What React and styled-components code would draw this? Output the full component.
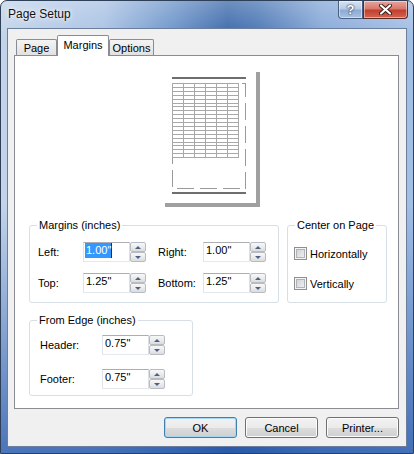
import styled, { createGlobalStyle } from "styled-components";

const GlobalStyle = createGlobalStyle`
  html, body { margin: 0; padding: 0; background: #fff; }
  body { font-family: "Liberation Sans", Arial, sans-serif; font-size: 11px; color: #000; }
`;

const Window = styled.div`
  width: 414px;
  height: 454px;
  box-sizing: border-box;
  border: 1px solid #2e3f58;
  border-radius: 7px 7px 0 0;
  background:
    linear-gradient(180deg, rgba(255,255,255,0.25) 0%, rgba(255,255,255,0) 8%, rgba(255,255,255,0) 45%, rgba(35,85,170,0.75) 100%),
    linear-gradient(90deg, #c3d4ea 0%, #a9c2e4 25%, #6b93c9 42%, #3c69aa 55%, #4a76b4 62%, #86a8d8 78%, #a3bfe5 100%);
  display: flex;
  flex-direction: column;
  overflow: hidden;
`;

const TitleBar = styled.div`
  height: 27px;
  display: flex;
  justify-content: space-between;
  align-items: flex-start;
`;

const Title = styled.div`
  padding: 6px 0 0 7px;
  font-size: 12px;
  line-height: 15px;
  color: #111;
  text-shadow: 0 0 6px rgba(255,255,255,0.95), 0 0 3px rgba(255,255,255,0.9);
`;

const Captions = styled.div`
  display: flex;
  margin-right: 5px;
`;

const CaptionButton = styled.div`
  box-sizing: border-box;
  width: ${p => p.$w}px;
  height: 18px;
  display: flex;
  align-items: center;
  justify-content: center;
  border: 1px solid ${p => (p.$close ? "#5b2a24" : "#4a5f80")};
  border-top: none;
  border-radius: ${p => (p.$close ? "0 0 4px 0" : "0 0 0 4px")};
  background: ${p =>
    p.$close
      ? "linear-gradient(180deg, #e8a69c 0%, #d8786b 45%, #c2402f 55%, #d4654f 100%)"
      : "linear-gradient(180deg, #d8e3f1 0%, #b8cbe5 45%, #8eabd5 55%, #a8c1e3 100%)"};
  box-shadow: inset 0 0 0 1px rgba(255,255,255,0.45);
  color: #fff;
  font-weight: bold;
  font-size: 13px;
  text-shadow: 0 0 2px #1c2c44, 0 0 1px #1c2c44;
`;

const Client = styled.div`
  flex: 1;
  margin: 0 6px 6px 6px;
  background: #f0f0f0;
  border: 1px solid #6b7f9c;
  padding: 6px 7px 0 6px;
  display: flex;
  flex-direction: column;
  font-family: "Liberation Sans", Arial, sans-serif;
  font-size: 11px;
`;

const TabRow = styled.div`
  display: flex;
  align-items: flex-end;
  height: 21px;
  margin-bottom: -1px;
  padding-left: 2px;
  position: relative;
  z-index: 1;
`;

const Tab = styled.div`
  box-sizing: border-box;
  width: ${p => p.$w}px;
  height: ${p => (p.$active ? 21 : 16)}px;
  margin-bottom: ${p => (p.$active ? 0 : 1)}px;
  padding-top: ${p => (p.$active ? 2 : 1)}px;
  line-height: 14px;
  text-align: center;
  border: 1px solid #898c95;
  border-bottom: none;
  border-radius: 2px 2px 0 0;
  background: ${p => (p.$active ? "#fff" : "linear-gradient(180deg, #f4f4f4 0%, #ebebeb 50%, #e1e1e1 100%)")};
`;

const Panel = styled.div`
  height: 354px;
  box-sizing: border-box;
  background: #fff;
  border: 1px solid #898c95;
  padding-top: 12px;
`;

const PreviewWrap = styled.div`
  display: flex;
  justify-content: center;
  padding-left: 8px;
  svg { display: block; }
`;

const GroupArea = styled.div`
  display: flex;
  flex-direction: column;
  align-items: flex-start;
  gap: 11px;
  margin-top: 11px;
  padding-left: 14px;
`;

const GroupRow = styled.div`
  display: flex;
  gap: 8px;
`;

const GroupBox = styled.fieldset`
  margin: 0;
  min-width: 0;
  width: ${p => p.$w}px;
  box-sizing: border-box;
  padding: ${p => p.$pad};
  border: 1px solid #d5dfe5;
  border-radius: 3px;
  display: flex;
  flex-direction: column;
  gap: ${p => p.$gap}px;

  & > div {
    margin-left: ${p => p.$indent}px;
  }
`;

const Legend = styled.legend`
  margin-left: 7px;
  padding: 0 2px;
  font-size: 11px;
  line-height: 13px;
  color: #000;
`;

const FieldRow = styled.div`
  display: flex;
  align-items: center;
  height: 20px;
`;

const Label = styled.span`
  width: ${p => p.$w}px;
  flex: none;
`;

const SpinBox = styled.div`
  display: flex;
  height: 20px;
  margin-right: ${p => p.$mr || 0}px;
`;

const Field = styled.div`
  box-sizing: border-box;
  width: 47px;
  height: 20px;
  border: 1px solid;
  border-color: #abadb3 #dbdfe6 #e3e9ef #e2e3ea;
  background: #fff;
  padding-left: 1px;
  display: flex;
  align-items: flex-start;
`;

const FieldText = styled.span`
  display: inline-block;
  line-height: 15px;
  padding-left: 1px;
  background: ${p => (p.$selected ? "#3399ff" : "transparent")};
  color: ${p => (p.$selected ? "#fff" : "#000")};
  border-right: 1px solid ${p => (p.$selected ? "#3a2a10" : "transparent")};
`;

const Spinner = styled.div`
  width: 16px;
  display: flex;
  flex-direction: column;
`;

const SpinButton = styled.div`
  flex: 1;
  box-sizing: border-box;
  border: 1px solid #b7bcc4;
  border-radius: 2px;
  background: linear-gradient(180deg, #f7f7f7 0%, #ececec 50%, #dcdcdc 100%);
  display: flex;
  align-items: center;
  justify-content: center;

  &::after {
    content: "";
    width: 0;
    height: 0;
    border-left: 3px solid transparent;
    border-right: 3px solid transparent;
    ${p => (p.$down ? "border-top: 3px solid #4c6284;" : "border-bottom: 3px solid #4c6284;")}
  }
`;

const CheckRow = styled.div`
  display: flex;
  align-items: center;
  gap: 3px;
  height: 13px;
`;

const CheckBox = styled.span`
  width: 13px;
  height: 13px;
  box-sizing: border-box;
  border: 1px solid #8e8f8f;
  background: linear-gradient(135deg, #c9ccd1 0%, #f6f6f6 100%);
  box-shadow: inset 0 0 0 1px #f4f4f4, inset 0 0 0 2px #b0b4ba;
`;

const ButtonRow = styled.div`
  display: flex;
  justify-content: flex-end;
  gap: 8px;
  padding-top: 8px;
`;

const Button = styled.button`
  width: 73px;
  height: 21px;
  box-sizing: border-box;
  padding: 0;
  font-family: "Liberation Sans", Arial, sans-serif;
  font-size: 11px;
  color: #000;
  border: 1px solid ${p => (p.$default ? "#3c7fb1" : "#707070")};
  border-radius: 3px;
  background: linear-gradient(180deg, #f2f2f2 0%, #ebebeb 50%, #dddddd 51%, #cfcfcf 100%);
  box-shadow: inset 0 0 0 1px ${p => (p.$default ? "#a6d8f6" : "#fcfcfc")};
`;

function Spin({ value, selected, mr }) {
  return (
    <SpinBox $mr={mr}>
      <Field>
        <FieldText $selected={selected}>{value}</FieldText>
      </Field>
      <Spinner>
        <SpinButton />
        <SpinButton $down />
      </Spinner>
    </SpinBox>
  );
}

function PagePreview() {
  const cols = [0, 1, 2, 3, 4, 5, 6].map(i => 11 + i * 11);
  const rows = Array.from({ length: 20 }, (_, i) => 15 + Math.round(i * 3.9));
  return (
    <svg width="100" height="140" viewBox="0 0 100 140" shapeRendering="crispEdges">
      <rect x="4" y="135" width="95" height="4" fill="#a0a0a0" />
      <rect x="95" y="4" width="4" height="135" fill="#a0a0a0" />
      <rect x="0" y="0" width="95" height="135" fill="#fff" />
      <rect x="11" y="9" width="74" height="2" fill="#6e6e6e" />
      <rect x="11" y="124" width="74" height="2" fill="#6e6e6e" />
      <rect x="11.5" y="15.5" width="73" height="105" fill="none" stroke="#9a9a9a" strokeDasharray="17 6" />
      <rect x="11" y="15" width="66" height="75" fill="#fff" />
      {rows.map(y => (
        <line key={"r" + y} x1="11" x2="78" y1={y + 0.5} y2={y + 0.5} stroke="#a8a8a8" />
      ))}
      {cols.map(x => (
        <line key={"c" + x} x1={x + 0.5} x2={x + 0.5} y1="15" y2={rows[rows.length - 1] + 1} stroke="#a8a8a8" />
      ))}
    </svg>
  );
}

export default function App() {
  return (
    <>
      <GlobalStyle />
      <Window>
        <TitleBar>
          <Title>Page Setup</Title>
          <Captions>
            <CaptionButton $w={25}>?</CaptionButton>
            <CaptionButton $w={45} $close>
              <svg width="13" height="11" viewBox="0 0 13 11">
                <path d="M2 1.5 L11 9.5 M11 1.5 L2 9.5" stroke="#3a1a16" strokeWidth="4" strokeLinecap="round" />
                <path d="M2 1.5 L11 9.5 M11 1.5 L2 9.5" stroke="#fff" strokeWidth="2.2" strokeLinecap="round" />
              </svg>
            </CaptionButton>
          </Captions>
        </TitleBar>
        <Client>
          <TabRow>
            <Tab $w={41}>Page</Tab>
            <Tab $w={52} $active>Margins</Tab>
            <Tab $w={45}>Options</Tab>
          </TabRow>
          <Panel>
            <PreviewWrap>
              <PagePreview />
            </PreviewWrap>
            <GroupArea>
              <GroupRow>
                <GroupBox $w={250} $pad="10px 0 9px 0" $indent={8} $gap={11}>
                  <Legend>Margins (inches)</Legend>
                  <FieldRow>
                    <Label $w={45}>Left:</Label>
                    <Spin value={'1.00"'} selected mr={12} />
                    <Label $w={45}>Right:</Label>
                    <Spin value={'1.00"'} />
                  </FieldRow>
                  <FieldRow>
                    <Label $w={45}>Top:</Label>
                    <Spin value={'1.25"'} mr={12} />
                    <Label $w={45}>Bottom:</Label>
                    <Spin value={'1.25"'} />
                  </FieldRow>
                </GroupBox>
                <GroupBox $w={100} $pad="15px 0 0 0" $indent={6} $gap={17}>
                  <Legend>Center on Page</Legend>
                  <CheckRow>
                    <CheckBox />
                    <span>Horizontally</span>
                  </CheckRow>
                  <CheckRow>
                    <CheckBox />
                    <span>Vertically</span>
                  </CheckRow>
                </GroupBox>
              </GroupRow>
              <GroupBox $w={164} $pad="8px 0 6px 0" $indent={10} $gap={14}>
                <Legend>From Edge (inches)</Legend>
                <FieldRow>
                  <Label $w={62}>Header:</Label>
                  <Spin value={'0.75"'} />
                </FieldRow>
                <FieldRow>
                  <Label $w={62}>Footer:</Label>
                  <Spin value={'0.75"'} />
                </FieldRow>
              </GroupBox>
            </GroupArea>
          </Panel>
          <ButtonRow>
            <Button $default>OK</Button>
            <Button>Cancel</Button>
            <Button>Printer...</Button>
          </ButtonRow>
        </Client>
      </Window>
    </>
  );
}
